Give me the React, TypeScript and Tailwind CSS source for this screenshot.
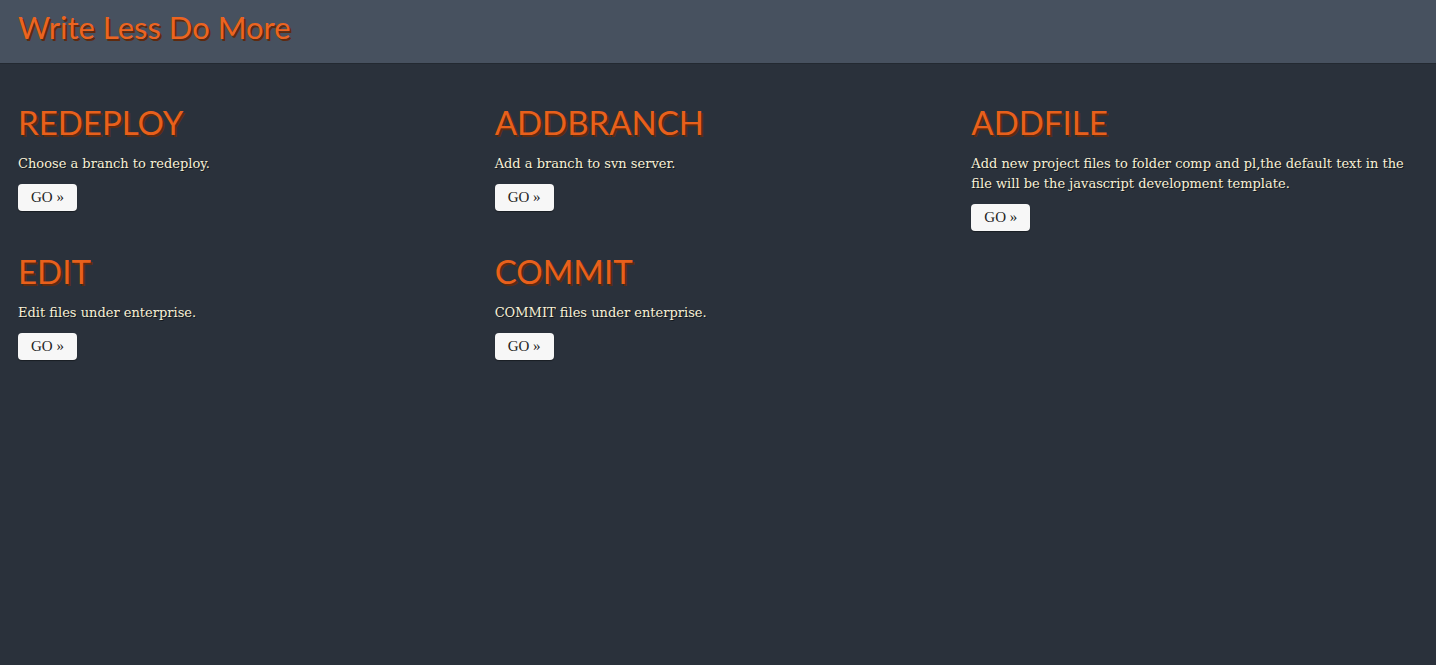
const items = [
  { title: "REDEPLOY", text: "Choose a branch to redeploy." },
  { title: "ADDBRANCH", text: "Add a branch to svn server." },
  {
    title: "ADDFILE",
    text: "Add new project files to folder comp and pl,the default text in the file will be the javascript development template.",
  },
  { title: "EDIT", text: "Edit files under enterprise." },
  { title: "COMMIT", text: "COMMIT files under enterprise." },
];

const App = () => {
  return (
    <div className="min-h-screen bg-[#2a313b]">
      <div className="h-16 bg-[#47515f] border-b border-[#232931] px-[18px] flex items-center">
        <h1
          className="text-[31px] leading-none text-[#ec6420] pb-2 [text-shadow:2px_2px_0_#5e2a0f]"
          style={{ fontFamily: "Lato, 'Open Sans', sans-serif" }}
        >
          Write Less Do More
        </h1>
      </div>
      <div className="grid grid-cols-3 gap-x-[30px] px-[18px] pt-[38px]">
        {items.map((item, i) => (
          <div key={i} className="mb-[20px]">
            <h2
              className="text-[33px] leading-[40px] text-[#e8601c] [text-shadow:2px_2px_0_#5e2a0f]"
              style={{ fontFamily: "Lato, 'Open Sans', sans-serif" }}
            >
              {item.title}
            </h2>
            <p
              className="mt-[12px] text-[13px] leading-5 text-[#f7f0d6] [text-shadow:1px_1px_0_#14181d]"
              style={{ fontFamily: "'DejaVu Serif', Georgia, serif" }}
            >
              {item.text}
            </p>
            <button
              className="mt-[10px] w-[59px] h-[27px] rounded bg-[#f7f7f7] text-[15px] text-[#222] shadow-[0_1px_1px_rgba(0,0,0,0.4)]"
              style={{ fontFamily: "'Liberation Serif', Georgia, serif" }}
            >
              GO »
            </button>
          </div>
        ))}
      </div>
    </div>
  );
};

export default App;
